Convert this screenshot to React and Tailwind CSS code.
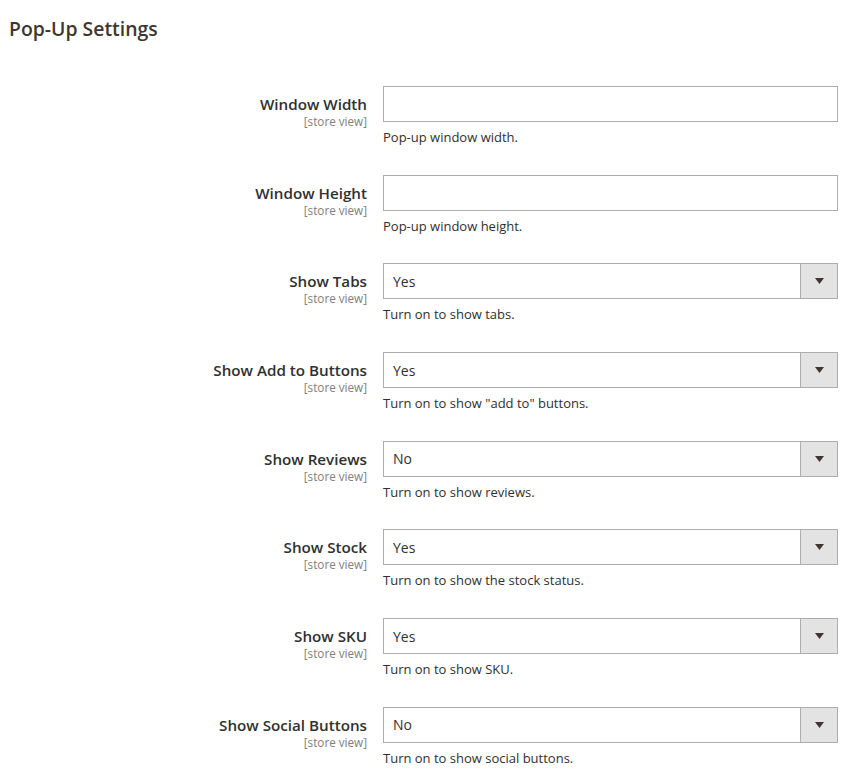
const fields = [
  { label: "Window Width", type: "text", note: "Pop-up window width." },
  { label: "Window Height", type: "text", note: "Pop-up window height." },
  { label: "Show Tabs", type: "select", value: "Yes", note: "Turn on to show tabs." },
  { label: "Show Add to Buttons", type: "select", value: "Yes", note: 'Turn on to show "add to" buttons.' },
  { label: "Show Reviews", type: "select", value: "No", note: "Turn on to show reviews." },
  { label: "Show Stock", type: "select", value: "Yes", note: "Turn on to show the stock status." },
  { label: "Show SKU", type: "select", value: "Yes", note: "Turn on to show SKU." },
  { label: "Show Social Buttons", type: "select", value: "No", note: "Turn on to show social buttons." },
];

const FieldRow = ({ field }) => (
  <div className="flex h-[88.7px]">
    {/* label column */}
    <div className="w-[367px] shrink-0 text-right pt-[9px]">
      <div className="text-[15.2px] leading-[19px] font-semibold text-[#303030]">{field.label}</div>
      <div className="text-[11.7px] leading-[14px] text-[#808080]">[store view]</div>
    </div>

    {/* control column */}
    <div className="flex-1 ml-4 mr-4">
      {field.type === "text" ? (
        <div className="h-9 border border-[#adadad] bg-white" />
      ) : (
        <div className="flex h-9 border border-[#adadad] bg-white">
          <div className="flex-1 flex items-center pl-[9px] text-[14px] text-[#303030]">{field.value}</div>
          <div className="w-[37px] flex items-center justify-center bg-[#e3e3e3] border-l border-[#adadad]">
            <svg width="9" height="6" viewBox="0 0 9 6">
              <path d="M0 0h9L4.5 6z" fill="#41362f" />
            </svg>
          </div>
        </div>
      )}
      <div className="mt-[6px] text-[13px] leading-[18px] text-[#303030]">{field.note}</div>
    </div>
  </div>
);

const App = () => {
  return (
    <div className="w-[854px] min-h-[783px] bg-white font-['Open_Sans',sans-serif]">
      <h2 className="pl-[9px] pt-[15px] text-[19.4px] leading-[28px] font-semibold text-[#41362f] mb-[43px]">
        Pop-Up Settings
      </h2>
      <div>
        {fields.map((field) => (
          <FieldRow key={field.label} field={field} />
        ))}
      </div>
    </div>
  );
};

export default App;
